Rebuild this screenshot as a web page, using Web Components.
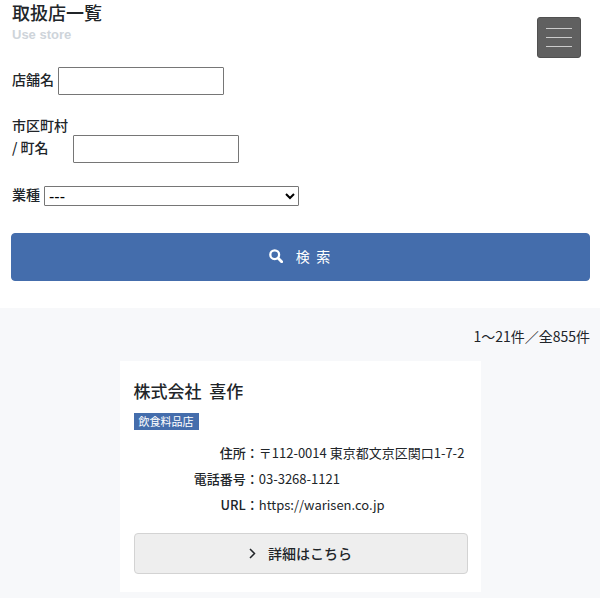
<!DOCTYPE html>
<html lang="ja">
<head>
<meta charset="utf-8">
<meta name="viewport" content="width=device-width, initial-scale=1">
<title>取扱店一覧</title>
<style>
    body {
        --main: #446dac;
        --text: #212529;
        --pale: #f7f8fa;
        margin: 0;
        background: #fff;
        color: var(--text);
        font: 14px/22px "Noto Sans CJK JP", sans-serif;
    }
</style>
</head>
<body>
<menu-button></menu-button>
<page-heading sub="Use store">取扱店一覧</page-heading>
<store-search></store-search>
<store-results count="1〜21件／全855件">
    <store-card category="飲食料品店" address="〒112-0014 東京都文京区関口1-7-2" tel="03-3268-1121" url="https://warisen.co.jp">株式会社&nbsp; 喜作</store-card>
</store-results>

<script>
// ========================================================== menu button, floats over the page
customElements.define('menu-button', class extends HTMLElement {
    constructor() {
        super()
            .attachShadow({ mode: 'open' })
            .innerHTML = `
                    <style>
                        :host {
                            position: fixed;
                            top: 17px;
                            right: 19px;
                            z-index: 10;
                        }
                        button {
                            display: flex;
                            flex-direction: column;
                            align-items: center;
                            justify-content: center;
                            gap: 8px;
                            width: 44px;
                            height: 41px;
                            padding: 0;
                            border: 1px solid #505050;
                            border-radius: 3px;
                            background: #606060;
                        }
                        span {
                            width: 26px;
                            height: 1px;
                            background: #ccc;
                        }
                    </style>
                    <button type="button" aria-label="メニュー"><span></span><span></span><span></span></button>`;
    }
});
// ========================================================== page title
customElements.define('page-heading', class extends HTMLElement {
    constructor() {
        super()
            .attachShadow({ mode: 'open' })
            .innerHTML = `
                    <style>
                        :host {
                            display: block;
                            padding: 0 12px;
                        }
                        h1 {
                            margin: 0;
                            font-size: 18px;
                            font-weight: 500;
                            line-height: 24px;
                        }
                        p {
                            margin: 0;
                            color: #ced4da;
                            font: bold 13px/22px "Liberation Sans", sans-serif;
                        }
                    </style>
                    <h1><slot></slot></h1>
                    <p>${this.getAttribute('sub')}</p>`;
    }
});
// ========================================================== search form
customElements.define('store-search', class extends HTMLElement {
    constructor() {
        super()
            .attachShadow({ mode: 'open' })
            .innerHTML = `
                    <style>
                        :host {
                            display: block;
                            padding: 21px 10px 27px 11px;
                        }
                        form {
                            display: flex;
                            flex-direction: column;
                        }
                        .row {
                            display: flex;
                            align-items: center;
                            gap: 4px;
                            padding-left: 1px;
                            margin-bottom: 19px;
                        }
                        .row.town {
                            align-items: flex-end;
                            gap: 5px;
                            margin-bottom: 20px;
                        }
                        .row.type {
                            margin-bottom: 24px;
                        }
                        label {
                            padding-bottom: 4px;
                            font-weight: 500;
                        }
                        .town label {
                            padding-bottom: 5px;
                        }
                        input, select {
                            box-sizing: border-box;
                            border: 1px solid #767676;
                            border-radius: 1px;
                            background: #fff;
                            color: #000;
                            font: inherit;
                        }
                        input {
                            width: 166px;
                            height: 28px;
                            padding: 1px 4px;
                        }
                        select {
                            width: 255px;
                            height: 20px;
                            padding: 0;
                            font: 16px/18px "Liberation Sans", sans-serif;
                        }
                        button {
                            display: flex;
                            align-items: center;
                            justify-content: center;
                            gap: 13px;
                            height: 48px;
                            padding: 0 8px 2px 6px;
                            border: 1px solid var(--main);
                            border-radius: 4px;
                            background: var(--main);
                            color: #fff;
                            font: inherit;
                        }
                    </style>
                    <form>
                        <div class="row">
                            <label for="name">店舗名</label>
                            <input id="name" type="text">
                        </div>
                        <div class="row town">
                            <label for="town">市区町村<br>/ 町名</label>
                            <input id="town" type="text">
                        </div>
                        <div class="row type">
                            <label for="type">業種</label>
                            <select id="type"><option>---</option></select>
                        </div>
                        <button type="button">
                            <svg width="14" height="14" viewBox="0 0 14 14" fill="none" stroke="#fff" aria-hidden="true">
                                <circle cx="5.7" cy="5.7" r="4.4" stroke-width="2.3"/>
                                <path d="M9 9l3.7 3.7" stroke-width="2.8" stroke-linecap="round"/>
                            </svg>
                            <span>検&nbsp; 索</span>
                        </button>
                    </form>`;
    }
});
// ========================================================== list of results
customElements.define('store-results', class extends HTMLElement {
    constructor() {
        super()
            .attachShadow({ mode: 'open' })
            .innerHTML = `
                    <style>
                        :host {
                            display: block;
                            padding: 17px 10px 30px;
                            background: var(--pale);
                        }
                        p {
                            margin: 0 0 14px;
                            text-align: right;
                        }
                        .list {
                            display: grid;
                            justify-content: center;
                            grid-template-columns: minmax(0, 361px);
                            gap: 20px;
                        }
                    </style>
                    <p>${this.getAttribute('count')}</p>
                    <div class="list"><slot></slot></div>`;
    }
});
// ========================================================== one store
customElements.define('store-card', class extends HTMLElement {
    constructor() {
        super()
            .attachShadow({ mode: 'open' })
            .innerHTML = `
                    <style>
                        :host {
                            display: block;
                            padding: 17px 13px 18px 14px;
                            background: #fff;
                        }
                        h2 {
                            margin: 0 0 10px;
                            font-size: 17px;
                            font-weight: 500;
                            line-height: 25px;
                        }
                        .tag {
                            display: table;
                            padding: 0 5px;
                            background: var(--main);
                            color: #fff;
                            font-size: 11px;
                            line-height: 17px;
                        }
                        dl {
                            display: grid;
                            grid-template-columns: 3fr 5fr;
                            margin: 10px 0 15px;
                            font-size: 13px;
                            line-height: 26px;
                        }
                        dt {
                            font-weight: 500;
                            text-align: right;
                        }
                        dd {
                            margin: 0;
                            white-space: nowrap;
                        }
                        dd a {
                            color: inherit;
                            text-decoration: none;
                        }
                        .more {
                            display: flex;
                            align-items: center;
                            justify-content: center;
                            gap: 12px;
                            height: 39px;
                            border: 1px solid #d3d3d3;
                            border-radius: 4px;
                            background: #eee;
                            color: inherit;
                            font-weight: 500;
                            line-height: 20px;
                            text-decoration: none;
                        }
                        .more span {
                            padding-bottom: 2px;
                        }
                    </style>
                    <h2><slot></slot></h2>
                    <span class="tag">${this.getAttribute('category')}</span>
                    <dl>
                        <dt>住所：</dt><dd>${this.getAttribute('address')}</dd>
                        <dt>電話番号：</dt><dd>${this.getAttribute('tel')}</dd>
                        <dt>URL：</dt><dd><a href="${this.getAttribute('url')}">${this.getAttribute('url')}</a></dd>
                    </dl>
                    <a class="more" href="#">
                        <svg width="7" height="11" viewBox="0 0 7 11" fill="none" stroke="currentColor" stroke-width="1.5" aria-hidden="true">
                            <path d="M1 1l4.5 4.5L1 10"/>
                        </svg>
                        <span>詳細はこちら</span>
                    </a>`;
    }
});
</script>
</body>
</html>
